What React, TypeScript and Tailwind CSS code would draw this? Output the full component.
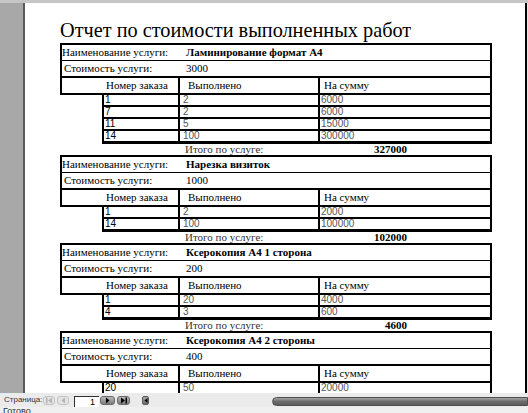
// Print preview of the "services cost" report with the viewer toolbar underneath.

import React from "react";

interface ServiceBlock {
  name: string;
  price: string;
  rows: [string, string, string][];
  total: string;
}

const services: ServiceBlock[] = [
  {
    name: "Ламинирование формат А4",
    price: "3000",
    rows: [
      ["1", "2", "6000"],
      ["7", "2", "6000"],
      ["11", "5", "15000"],
      ["14", "100", "300000"],
    ],
    total: "327000",
  },
  {
    name: "Нарезка визиток",
    price: "1000",
    rows: [
      ["1", "2", "2000"],
      ["14", "100", "100000"],
    ],
    total: "102000",
  },
  {
    name: "Ксерокопия А4 1 сторона",
    price: "200",
    rows: [
      ["1", "20", "4000"],
      ["4", "3", "600"],
    ],
    total: "4600",
  },
  {
    name: "Ксерокопия А4 2 стороны",
    price: "400",
    rows: [
      ["20", "50", "20000"],
      ["21", "10", "4000"],
    ],
    total: "24000",
  },
];

function Service({ item }: { item: ServiceBlock }) {
  return (
    <div className="w-[432px] text-[11px] text-black">
      <div className="border-2 border-black">
        <div className="flex h-[16px] items-center border-b border-black leading-none">
          <span className="w-[124px]">Наименование услуги:</span>
          <span className="font-bold">{item.name}</span>
        </div>
        <div className="flex h-[17px] items-center border-b-2 border-black pl-[2px] leading-none">
          <span className="w-[122px]">Стоимость услуги:</span>
          <span>{item.price}</span>
        </div>
        <div className="flex h-[15px] leading-none">
          <div className="flex w-[118px] items-center border-r-2 border-black pl-[44px]">Номер заказа</div>
          <div className="flex w-[140px] items-center border-r-2 border-black pl-[8px]">Выполнено</div>
          <div className="flex flex-1 items-center pl-[4px]">На сумму</div>
        </div>
      </div>

      <div className="ml-[42px] w-[390px] border-x-2 border-black font-['Liberation_Sans',sans-serif] text-[10px] leading-none">
        {item.rows.map((row, i) => (
          <div
            key={i}
            className={`flex ${i === item.rows.length - 1 ? "h-[13px] border-b-[3px]" : "h-[12px] border-b-2"} border-black`}
          >
            <div className="flex w-[76px] items-center border-r-2 border-black pl-[1px]">{row[0]}</div>
            <div className="flex w-[140px] items-center border-r-2 border-black pl-[3px] text-[#555]">{row[1]}</div>
            <div className="flex flex-1 items-center pl-[1px] text-[#555]">{row[2]}</div>
          </div>
        ))}
      </div>

      <div className="flex h-[11px] items-center leading-none">
        <div className="w-[125px]" />
        <div className="flex w-[222px] items-center justify-between">
          <span className="text-[#333]">Итого по услуге:</span>
          <span className="font-bold">{item.total}</span>
        </div>
      </div>
    </div>
  );
}

function Arrow({ dir, bar, color }: { dir: "l" | "r"; bar?: boolean; color: string }) {
  return (
    <svg width="9" height="7" viewBox="0 0 9 7">
      {dir === "l" ? (
        <>
          {bar && <rect x="1" y="0.5" width="1.5" height="6" fill={color} />}
          <polygon points={bar ? "7,0.5 3,3.5 7,6.5" : "6,0.5 2.5,3.5 6,6.5"} fill={color} />
        </>
      ) : (
        <>
          <polygon points={bar ? "2,0.5 6,3.5 2,6.5" : "3,0.5 6.5,3.5 3,6.5"} fill={color} />
          {bar && <rect x="6.5" y="0.5" width="1.5" height="6" fill={color} />}
        </>
      )}
    </svg>
  );
}

export default function App() {
  return (
    <div className="flex h-[413px] w-[528px] flex-col overflow-hidden bg-white font-['Liberation_Serif',serif]">
      <div className="h-[3px] bg-[#c6c6c6]" />
      <div className="flex h-[390px]">
        <div className="w-[23px] bg-[#a8a8a8]" />
        <div className="w-[2px] bg-[#5a5a5a]" />
        <div className="flex-1 overflow-hidden bg-white pl-[35px] pt-[15px]">
          <h1 className="mb-[1px] whitespace-nowrap text-[20.3px] leading-[24px] text-black">
            Отчет по стоимости выполненных работ
          </h1>
          {services.map((s) => (
            <Service key={s.name} item={s} />
          ))}
        </div>
        <div className="w-[2px] bg-black" />
        <div className="w-[1px] bg-[#e8e8e8]" />
      </div>

      <div className="flex h-[14px] items-center bg-[#ebebeb] font-['Liberation_Sans',sans-serif]">
        <span className="ml-[4px] w-[39px] text-[8px] leading-none text-[#333]">Страница:</span>
        <button type="button" className="flex h-[9px] w-[12px] items-center justify-center rounded-[3px] border border-[#c4c4c4] bg-[#e4e4e4]">
          <Arrow dir="l" bar color="#b4b4b4" />
        </button>
        <button type="button" className="ml-[2px] flex h-[9px] w-[12px] items-center justify-center rounded-[3px] border border-[#c4c4c4] bg-[#e4e4e4]">
          <Arrow dir="l" color="#b4b4b4" />
        </button>
        <div className="ml-[5px] mt-[3px] flex h-[11px] w-[25px] items-center justify-end border-l border-t border-[#303030] border-b-[#d0d0d0] border-r-[#d0d0d0] bg-white pr-[4px] text-[9px] leading-none text-black">
          1
        </div>
        <button type="button" className="ml-[1px] flex h-[9px] w-[15px] items-center justify-center rounded-[3px] border border-[#6a6a6a] bg-gradient-to-b from-[#b8b8b8] to-[#7c7c7c]">
          <Arrow dir="r" color="#000" />
        </button>
        <button type="button" className="ml-[2px] flex h-[9px] w-[13px] items-center justify-center rounded-[3px] border border-[#6a6a6a] bg-gradient-to-b from-[#b8b8b8] to-[#7c7c7c]">
          <Arrow dir="r" bar color="#000" />
        </button>
        <button type="button" className="ml-[12px] flex h-[9px] w-[7px] items-center justify-center rounded-[2px] border border-[#5a5a5a] bg-gradient-to-b from-[#a8a8a8] to-[#6a6a6a]">
          <svg width="4" height="5" viewBox="0 0 4 5">
            <polygon points="3.5,0 0.5,2.5 3.5,5" fill="#000" />
          </svg>
        </button>
        <div className="ml-[123px] mt-[2px] h-[9px] flex-1 rounded-l-full border border-[#4e4e4e] bg-gradient-to-b from-[#a4a4a4] via-[#6c6c6c] to-[#5c5c5c]" />
      </div>

      <div className="h-[6px] overflow-hidden bg-[#f0f0f0] font-['Liberation_Sans',sans-serif]">
        <div className="-mt-[1px] pl-[3px] text-[9px] leading-[11px] text-[#333]">Готово</div>
      </div>
    </div>
  );
}
